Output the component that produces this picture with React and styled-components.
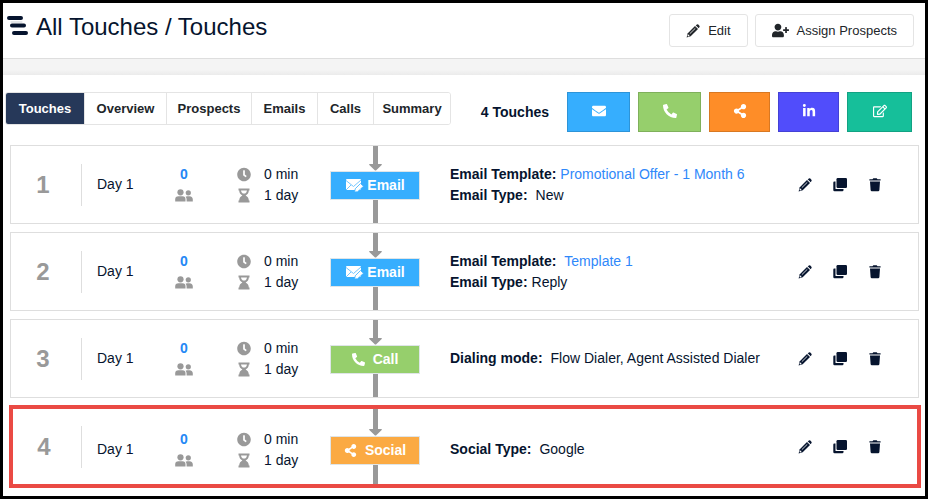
import React from "react";
import styled, { createGlobalStyle } from "styled-components";
import {
  FaUserPlus,
  FaEnvelope,
  FaPhoneAlt,
  FaShareAlt,
  FaLinkedinIn,
  FaRegEdit,
  FaClock,
} from "react-icons/fa";

const GlobalStyle = createGlobalStyle`
  *, *::before, *::after { box-sizing: border-box; }
  body {
    margin: 0;
    background: #fff;
    color: #06142e;
    font: 14px/21px "Liberation Sans", Arial, sans-serif;
  }
  button { font: inherit; color: inherit; cursor: pointer; }
  h1, h2, p, ol, dl, dd { margin: 0; padding: 0; }
`;

const Page = styled.div`
  min-height: 100vh;
  border: 3px solid #000;
  display: flex;
  flex-direction: column;
`;

const Header = styled.header`
  display: flex;
  justify-content: space-between;
  align-items: center;
  height: 56px;
  padding: 0 11px 0 4px;
  border-bottom: 1px solid #dedede;
`;

const Title = styled.h1`
  display: flex;
  gap: 8px;
  font-size: 24px;
  line-height: 28px;
  font-weight: 400;
  margin-bottom: 7px;
  svg { margin-top: 2px; }
`;

const HeaderActions = styled.div`
  display: flex;
  gap: 7px;
`;

const OutlineButton = styled.button`
  display: flex;
  align-items: center;
  gap: 8px;
  height: 33px;
  padding: 0 16px;
  border: 1px solid #e4e4e4;
  border-radius: 3px;
  background: #fff;
  color: #212529;
  font-size: 13px;
`;

const Band = styled.div`
  height: 16px;
  background: linear-gradient(#f4f4f4 11px, #ebebeb);
`;

const Toolbar = styled.div`
  display: flex;
  align-items: flex-start;
  padding: 17px 13px 13px 2px;
`;

const Tabs = styled.nav`
  display: flex;
  border: 1px solid #e4e4e4;
  border-radius: 3px;
  overflow: hidden;
`;

const Tab = styled.button`
  width: ${(p) => p.$width}px;
  height: 31px;
  padding: 0;
  border: 0;
  border-left: ${(p) => (p.$active ? 0 : 1)}px solid #e4e4e4;
  background: ${(p) => (p.$active ? "#263859" : "#fff")};
  color: ${(p) => (p.$active ? "#fff" : "#212529")};
  font-size: 13px;
  font-weight: 700;
`;

const Count = styled.h2`
  margin-left: auto;
  margin-right: 18px;
  font-size: 14px;
  line-height: 40px;
`;

const AddButtons = styled.div`
  display: flex;
  gap: 8px;
`;

const AddButton = styled.button`
  display: flex;
  align-items: center;
  justify-content: center;
  width: ${(p) => p.$width}px;
  height: 40px;
  padding: 0 0 2px;
  border: 1px solid rgba(0, 0, 0, 0.15);
  background: ${(p) => p.$color};
  color: #fff;
`;

const TouchList = styled.ol`
  display: flex;
  flex-direction: column;
  gap: 8px;
  padding: 0 6px 8px 7px;
  list-style: none;
`;

const Row = styled.li`
  display: grid;
  grid-template-columns: ${(p) => (p.$selected ? 69 : 71)}px 70px 64px 56px 58px 90px 1fr auto;
  align-items: center;
  min-height: ${(p) => (p.$selected ? 83 : 79)}px;
  margin: ${(p) => (p.$selected ? "-1px -2px 0 -1px" : "0")};
  border: ${(p) => (p.$selected ? "4px solid #ea4a44" : "1px solid #dedede")};
`;

const Order = styled.div`
  height: 42px;
  border-right: 1px solid #dedede;
  padding-right: 6px;
  color: #999;
  font-size: 24px;
  line-height: 42px;
  font-weight: 700;
  text-align: center;
`;

const Cell = styled.div`
  padding-top: ${(p) => (p.$low ? 6 : 0)}px;
`;

const DayCell = styled(Cell)`
  padding-left: 15px;
`;

const StatCell = styled(Cell)`
  display: flex;
  flex-direction: column;
  align-items: center;
  color: #999;
  svg { height: 21px; }
`;

const ProspectLink = styled.a`
  color: #2488f5;
  font-size: 14px;
  font-weight: 700;
  text-decoration: none;
`;

const TimeText = styled(Cell)`
  margin-left: -8px;
`;

const Flow = styled.div`
  display: flex;
  flex-direction: column;
  align-items: center;
  align-self: stretch;
`;

const Incoming = styled.div`
  display: flex;
  flex-direction: column;
  align-items: center;
  height: ${(p) => (p.$low ? 27 : 25)}px;
`;

const Line = styled.div`
  flex: 1;
  width: 5px;
  background: #999;
`;

const TypeButton = styled.button`
  display: flex;
  align-items: center;
  justify-content: center;
  gap: ${(p) => p.$gap}px;
  width: 100%;
  height: 29px;
  padding: 0;
  border: 1px solid #dfe5e8;
  background: ${(p) => p.$color};
  color: #fff;
  font-size: 14px;
  font-weight: 700;
`;

const Details = styled(Cell).attrs({ as: "dl" })`
  padding-left: 30px;
`;

const Detail = styled.div`
  display: flex;
  gap: ${(p) => p.$gap}px;
  dt { font-weight: 700; }
`;

const TemplateLink = styled.a`
  color: #2f88fa;
  text-decoration: none;
`;

const RowActions = styled.div`
  display: flex;
  gap: 20px;
  margin-right: ${(p) => (p.$selected ? 35 : 36)}px;
`;

const IconButton = styled.button`
  display: flex;
  align-items: center;
  justify-content: center;
  width: 15px;
  height: 21px;
  padding: 0;
  border: 0;
  background: none;
`;

const Logo = () => (
  <svg width="21" height="22" viewBox="0 0 21 22" stroke="#06142e" strokeWidth="4" strokeLinecap="round" aria-hidden="true">
    <path d="M2 3H14M5 10.500H17M7 18H19" />
    <path d="M4 7H15" stroke="#c8ccd2" strokeWidth="1" />
  </svg>
);

const PencilIcon = () => (
  <svg width="14" height="14" viewBox="0 0 14 14" fill="currentColor" aria-hidden="true">
    <path d="M9.700 1.200 11 .4Q11.700 0 12.300.6L13.400 1.700Q14 2.300 13.500 3L12.700 4.200Z" />
    <path d="m9 2 3 3-7.300 7.200-4.100 1.200L1.800 9.300Z" />
    <path d="M3.800 9.700 9.300 4.300" stroke="#fff" strokeWidth=".8" />
    <path d="m2.100 10.300 1.600 1.600-1.600.6-.6-.6Z" fill="#fff" />
  </svg>
);

const CopyIcon = () => (
  <svg width="14" height="14" viewBox="0 0 14 14" fill="currentColor" aria-hidden="true">
    <rect x="3.500" y="0" width="10.500" height="10" rx="1.200" />
    <path d="M1.200 3.500H2.500V11H10.500V12Q10.500 13.200 9.300 13.200H1.500Q.3 13.200.3 12V4.700Q.3 3.500 1.200 3.500Z" />
  </svg>
);

const TrashIcon = () => (
  <svg width="12" height="14" viewBox="0 0 12 14" fill="currentColor" aria-hidden="true">
    <path d="M.4 1.200H3.500L4.300.3H7.700L8.500 1.200H11.600V2.600H.4ZM1 3.600H11L10.400 12Q10.300 13.300 9.100 13.300H2.900Q1.700 13.300 1.600 12Z" />
  </svg>
);

const PeopleIcon = () => (
  <svg width="18" height="14" viewBox="0 0 18 14" fill="currentColor" aria-hidden="true">
    <circle cx="5.500" cy="3.800" r="3.100" />
    <path d="M.2 13V11Q.2 7.800 3.500 7.800H7.500Q10.500 7.800 10.500 11V13Z" />
    <circle cx="13.300" cy="4.300" r="2.600" />
    <path d="M11.600 13V11Q11.600 9.300 10.600 8.200 11.300 7.800 12 7.800H14.500Q17.800 8 17.800 11V13Z" />
  </svg>
);

const HourglassIcon = () => (
  <svg width="12" height="14" viewBox="0 0 12 14" fill="currentColor" aria-hidden="true">
    <path d="M.5 0h11v2H10.800Q10.800 5.400 7.600 7 10.800 8.600 10.800 12h.7v2H.5V12h.7Q1.200 8.600 4.400 7 1.200 5.400 1.200 2H.5Z" />
    <path d="M3 2H9Q8.800 4 7.200 5H4.800Q3.200 4 3 2Z" fill="#fff" />
  </svg>
);

const MailPenIcon = () => (
  <svg width="19" height="16" viewBox="0 0 19 16" aria-hidden="true">
    <rect x="1" y="1" width="15" height="11" rx="1" fill="#fff" />
    <path d="M1 2.500 8.500 8.500 16 2M1 12l5-5" fill="none" stroke="#75c7ff" />
    <path d="m9.500 14 .8-3.300L15.500 5.500l3 2.800-6 5.500Z" fill="#fff" stroke="#36aefe" strokeWidth=".8" />
  </svg>
);

const ArrowDown = () => (
  <svg width="13" height="9" viewBox="0 0 13 9" fill="#999" aria-hidden="true">
    <path d="M4 0h5v2h3.200q1.100.2.500 1.100L7.500 8q-1 1.200-2 0L.3 3.100Q-.3 2.200.8 2H4Z" />
  </svg>
);

const tabs = [
  ["Touches", 78],
  ["Overview", 82],
  ["Prospects", 85],
  ["Emails", 66],
  ["Calls", 56],
  ["Summary", 77],
];

const addTypes = [
  ["Add email", "#36aefe", 63, FaEnvelope],
  ["Add call", "#96cf6c", 63, FaPhoneAlt],
  ["Add social", "#fe8d28", 61, FaShareAlt],
  ["Add LinkedIn", "#514dfb", 61, FaLinkedinIn],
  ["Add task", "#16bf9a", 65, FaRegEdit],
];

const kinds = {
  Email: { color: "#36aefe", gap: 3, icon: <MailPenIcon /> },
  Call: { color: "#96cf6c", gap: 8, icon: <FaPhoneAlt size={13} /> },
  Social: { color: "#fbaa43", gap: 8, icon: <FaShareAlt size={13} /> },
};

const touches = [
  {
    kind: "Email",
    details: [
      { label: "Email Template:", value: "Promotional Offer - 1 Month 6", link: true, gap: 4 },
      { label: "Email Type:", value: "New", gap: 8 },
    ],
  },
  {
    kind: "Email",
    details: [
      { label: "Email Template:", value: "Template 1", link: true, gap: 8 },
      { label: "Email Type:", value: "Reply", gap: 4 },
    ],
  },
  { kind: "Call", details: [{ label: "Dialing mode:", value: "Flow Dialer, Agent Assisted Dialer", gap: 8 }] },
  { kind: "Social", selected: true, details: [{ label: "Social Type:", value: "Google", gap: 8 }] },
];

function TouchRow({ touch, order }) {
  const { kind, details, selected } = touch;
  const { color, gap, icon } = kinds[kind];
  return (
    <Row $selected={selected}>
      <Order>{order}</Order>
      <DayCell $low={selected}>Day 1</DayCell>
      <StatCell $low={selected}>
        <ProspectLink href="#prospects">0</ProspectLink>
        <PeopleIcon />
      </StatCell>
      <StatCell $low={selected}>
        <FaClock size={14} />
        <HourglassIcon />
      </StatCell>
      <TimeText $low={selected}>
        <p>0 min</p>
        <p>1 day</p>
      </TimeText>
      <Flow>
        <Incoming $low={selected}>
          <Line />
          <ArrowDown />
        </Incoming>
        <TypeButton $color={color} $gap={gap}>{icon}{kind}</TypeButton>
        <Line />
      </Flow>
      <Details $low={selected}>
        {details.map((d) => (
          <Detail key={d.label} $gap={d.gap}>
            <dt>{d.label}</dt>
            <dd>{d.link ? <TemplateLink href="#template">{d.value}</TemplateLink> : d.value}</dd>
          </Detail>
        ))}
      </Details>
      <RowActions $selected={selected}>
        <IconButton aria-label="Edit touch"><PencilIcon /></IconButton>
        <IconButton aria-label="Copy touch"><CopyIcon /></IconButton>
        <IconButton aria-label="Delete touch"><TrashIcon /></IconButton>
      </RowActions>
    </Row>
  );
}

export default function App() {
  return (
    <Page>
      <GlobalStyle />
      <Header>
        <Title><Logo />All Touches / Touches</Title>
        <HeaderActions>
          <OutlineButton><PencilIcon />Edit</OutlineButton>
          <OutlineButton><FaUserPlus size={17} />Assign Prospects</OutlineButton>
        </HeaderActions>
      </Header>
      <Band />
      <main>
        <Toolbar>
          <Tabs>
            {tabs.map(([name, width], i) => (
              <Tab key={name} $width={width} $active={i === 0}>{name}</Tab>
            ))}
          </Tabs>
          <Count>4 Touches</Count>
          <AddButtons>
            {addTypes.map(([label, color, width, Icon]) => (
              <AddButton key={label} aria-label={label} $color={color} $width={width}>
                <Icon size={14} />
              </AddButton>
            ))}
          </AddButtons>
        </Toolbar>
        <TouchList>
          {touches.map((touch, i) => (
            <TouchRow key={i} touch={touch} order={i + 1} />
          ))}
        </TouchList>
      </main>
    </Page>
  );
}
